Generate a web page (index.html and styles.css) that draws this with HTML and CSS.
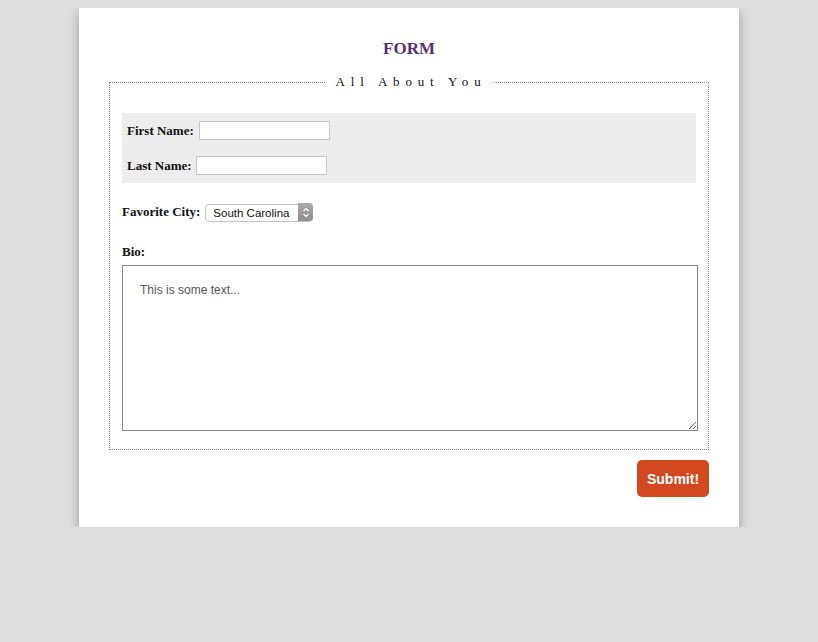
FILE: index.html
```html
<!DOCTYPE html>
<html>
<head>
<meta charset="utf-8">
<link rel="stylesheet" href="styles.css">
</head>
<body>
<div class="card">
  <h1 class="title">FORM</h1>
  <form class="form">
    <fieldset class="fieldset">
      <legend class="legend">All About You</legend>
      <div class="names">
        <div class="row"><label class="label">First Name:</label> <input class="text-input" type="text"></div>
        <div class="row"><label class="label">Last Name:</label> <input class="text-input" type="text"></div>
      </div>
      <div class="city-row">
        <label class="label">Favorite City:</label>
        <span class="select-wrap">
          <select class="select">
            <option>South Carolina</option>
          </select>
          <span class="select-arrow">
            <svg width="8" height="11" viewBox="0 0 8 11"><path d="M1.5 4 L4 1.5 L6.5 4 M1.5 7 L4 9.5 L6.5 7" fill="none" stroke="#fff" stroke-width="1.2"/></svg>
          </span>
        </span>
      </div>
      <label class="label bio-label">Bio:</label>
      <textarea class="textarea">This is some text...</textarea>
    </fieldset>
    <div class="actions">
      <button class="submit" type="button">Submit!</button>
    </div>
  </form>
</div>
</body>
</html>
```
FILE: styles.css
```css
body {
  margin: 8px;
  background: #dddddd;
  font-family: "Liberation Serif", "DejaVu Serif", serif;
}
.card {
  width: 600px;
  margin: 0 auto;
  background: #fff;
  padding: 31px 30px 30px;
  box-shadow: 0 4px 10px rgba(0,0,0,0.3);
}
.title {
  margin: 0 0 15px;
  text-align: center;
  font-size: 17px;
  line-height: 20px;
  color: #5a3070;
  font-weight: bold;
}
.form { margin: 0; }
.fieldset {
  margin: 0;
  width: 600px;
  min-width: 0;
  box-sizing: border-box;
  border: 1px dotted #8a8a8a;
  padding: 0 12px 18px;
}
.legend {
  margin: 0 auto;
  padding: 0 7px 0 11px;
  font-size: 13px;
  line-height: 16px;
  letter-spacing: 5.8px;
  color: #111;
}
.names {
  margin-top: 23px;
  background: #ededed;
  padding: 8px 5px;
  display: flex;
  flex-direction: column;
  gap: 16px;
}
.row {
  display: flex;
  align-items: center;
  gap: 4px;
  height: 19px;
}
.row:first-child { gap: 5px; }
.label {
  font-weight: bold;
  font-size: 13px;
  color: #111;
}
.text-input {
  width: 131px;
  height: 19px;
  box-sizing: border-box;
  border: 1px solid #c8c8c8;
  margin: 0;
  padding: 0 3px;
}
.city-row {
  margin-top: 20px;
  display: flex;
  align-items: center;
  gap: 5px;
  height: 18px;
}
.select-wrap {
  position: relative;
  display: inline-block;
  height: 18px;
}
.select {
  appearance: none;
  -webkit-appearance: none;
  width: 108px;
  height: 18px;
  box-sizing: border-box;
  margin: 0;
  border: 1px solid #c4c4c4;
  border-radius: 4px;
  background: #fff;
  font-family: "Liberation Sans", Arial, sans-serif;
  font-size: 11.5px;
  color: #111;
  padding: 0 0 0 7px;
}
.select-arrow {
  position: absolute;
  right: 0;
  top: 0;
  width: 15px;
  height: 18px;
  border-radius: 0 4px 4px 0;
  background: linear-gradient(#aaa, #8f8f8f);
  display: flex;
  align-items: center;
  justify-content: center;
}
.bio-label {
  display: block;
  margin-top: 23px;
  line-height: 16px;
}
.textarea {
  display: block;
  margin-top: 5px;
  width: 576px;
  height: 166px;
  box-sizing: border-box;
  border: 1px solid #888;
  padding: 17px 17px;
  font-family: "Liberation Sans", Arial, sans-serif;
  font-size: 12px;
  color: #555;
  resize: both;
}
.actions {
  display: flex;
  justify-content: flex-end;
  margin-top: 10px;
}
.submit {
  width: 72px;
  height: 37px;
  border: none;
  border-radius: 5px;
  background: #d3481f;
  color: #fff;
  font-family: "Liberation Sans", Arial, sans-serif;
  font-weight: bold;
  font-size: 14px;
  padding: 0;
}
```
